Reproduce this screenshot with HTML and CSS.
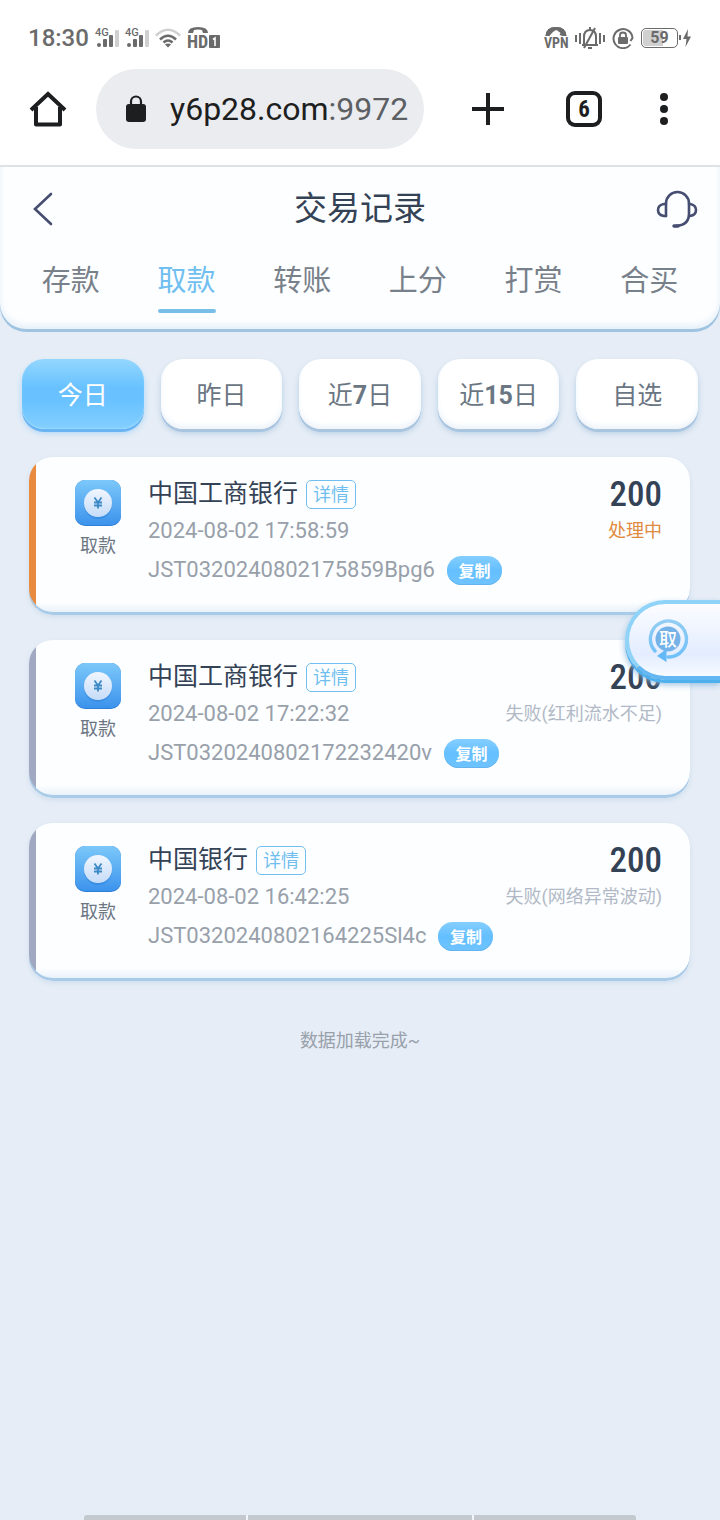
FILE: index.html
```html
<!DOCTYPE html>
<html lang="zh-CN">

<head>
    <meta charset="UTF-8" />
    <meta name="viewport" content="width=device-width, initial-scale=1.0" />
    <title>交易记录</title>
    <link rel="stylesheet" href="styles.css">
</head>

<body>
    <!-- shared icons -->
    <svg class="defs" width="0" height="0" aria-hidden="true">
        <defs>
            <linearGradient id="coin-bg" x1="0" y1="0" x2="0" y2="1">
                <stop offset="0" stop-color="#7cc8fa" />
                <stop offset="1" stop-color="#3c93ec" />
            </linearGradient>
            <linearGradient id="coin-face" x1="0" y1="0" x2="0" y2="1">
                <stop offset="0" stop-color="#f0f6ff" />
                <stop offset="1" stop-color="#c6dcf8" />
            </linearGradient>
            <linearGradient id="ring" x1="0" y1="0" x2="0" y2="1">
                <stop offset="0" stop-color="#92cdf3" />
                <stop offset="1" stop-color="#6fc0fa" />
            </linearGradient>
        </defs>
        <symbol id="coin" viewBox="0 0 46 46">
            <rect width="46" height="46" rx="10" fill="#2f7fd6" />
            <rect width="46" height="45" rx="10" fill="url(#coin-bg)" />
            <circle cx="23" cy="25" r="14" fill="#1f78d0" opacity=".35" />
            <circle cx="23" cy="23" r="14" fill="url(#coin-face)" />
            <path d="M19.5 17.500l3.500 5 3.500-5M19 22.500h8M19 25.500h8M23 22.500v6" fill="none" stroke="#3c8ac6" stroke-width="1.800" />
        </symbol>
    </svg>

    <div class="status-bar">
        <div class="status-group">
            <span class="clock">18:30</span>
            <svg class="signal" width="24" height="20" viewBox="0 0 24 20">
                <text x="0" y="8" font-size="11" font-weight="500">4G</text>
                <circle cx="4" cy="17" r="2" />
                <rect x="8" y="11" width="4" height="8" rx="1" />
                <rect x="14" y="7" width="4" height="12" rx="1" />
                <rect class="off" x="20" y="2" width="4" height="17" rx="1" />
            </svg>
            <svg class="signal" width="24" height="20" viewBox="0 0 24 20">
                <text x="0" y="8" font-size="11" font-weight="500">4G</text>
                <circle cx="4" cy="17" r="2" />
                <rect x="8" y="11" width="4" height="8" rx="1" />
                <rect x="14" y="7" width="4" height="12" rx="1" />
                <rect class="off" x="20" y="2" width="4" height="17" rx="1" />
            </svg>
            <svg width="26" height="20" viewBox="0 0 26 20" fill="none" stroke-width="2.600">
                <path d="M1 7.500Q13-4 25 7.500" stroke="#cfcfcf" />
                <path d="M5 11.500Q13 4 21 11.500" stroke="#6b6b6b" />
                <path d="M8.500 14.500Q13 10.500 17.500 14.500" stroke="#6b6b6b" />
                <path d="M10 16.500q3-2 6 0l-3 3z" fill="#6b6b6b" stroke="none" />
            </svg>
            <svg class="hd" width="33" height="24" viewBox="0 0 33 24" fill="#6b6b6b">
                <path d="M1 7Q1 1 11 1t10 6h-5l-1-3q-4-1-8 0L6 7z" />
                <text class="badge-text" x="0" y="22" font-size="18">HD</text>
                <rect x="22" y="9" width="11" height="13" rx="1" />
                <path d="M26 13.500l2-1.500v8" fill="none" stroke="#fff" stroke-width="1.600" />
            </svg>
        </div>
        <div class="status-group status-right">
            <svg class="vpn" width="24" height="24" viewBox="0 0 24 24" fill="#6b6b6b">
                <path d="M1.500 10Q2 1 12 1t10.500 9h-4l-3-1 1-2-4-3Q9 5 5.500 10z" />
                <path d="M2.500 10Q3 2 12 2t9.500 8" fill="none" stroke="#6b6b6b" stroke-width="2" />
                <text class="badge-text" x="0" y="22" font-size="14">VPN</text>
            </svg>
            <svg width="30" height="24" viewBox="0 0 30 24" fill="none" stroke="#6b6b6b" stroke-width="2">
                <path d="M1 9v7M5 7v11M25 7v11M29 9v7M7 19h16M9 18V11q0-7 6-7t6 7v7M15 1v3M13 22h4" />
                <path d="M20 2L9 22" />
            </svg>
            <svg width="22" height="22" viewBox="0 0 22 22" fill="#6b6b6b">
                <path d="M18.500 17.500A9.500 9.500 0 1 1 20.500 11l-2 3" fill="none" stroke="#6b6b6b" stroke-width="2" />
                <rect x="6" y="10" width="10" height="7" rx="1" />
                <path d="M8 10V8q0-2.500 3-2.500T14 8v2" fill="none" stroke="#6b6b6b" stroke-width="1.800" />
            </svg>
            <div class="battery">
                <span class="battery-level">59</span>
                <svg width="13" height="20" viewBox="0 0 13 20" fill="#6b6b6b">
                    <rect x="0" y="7" width="2" height="5" />
                    <path d="M9 1L4 11h3.500L6.500 19 12 8.500H8.500z" />
                </svg>
            </div>
        </div>
    </div>

    <div class="browser-bar">
        <button class="icon-btn" aria-label="主页">
            <svg width="38" height="38" viewBox="0 0 38 38" fill="none" stroke="#1d1e20" stroke-width="4">
                <path d="M2 20L19 4l17 16" stroke-linejoin="miter" />
                <path d="M7 17v17.500h24V17" stroke-linejoin="round" />
            </svg>
        </button>
        <a class="address" href="#">
            <svg width="22" height="28" viewBox="0 0 22 28" fill="#1d1e20">
                <rect x="1" y="9" width="20" height="18" rx="3" />
                <path d="M6 10V6.500a5 5 0 0 1 10 0V10" fill="none" stroke="#1d1e20" stroke-width="2.200" />
            </svg>
            <span class="url">y6p28.com<span class="port">:9972</span></span>
        </a>
        <div class="browser-actions">
            <button class="icon-btn" aria-label="新标签页">
                <svg width="32" height="32" viewBox="0 0 32 32" stroke="#1d1e20" stroke-width="4"><path d="M16 0v32M0 16h32" /></svg>
            </button>
            <button class="tab-count">6</button>
            <button class="icon-btn" aria-label="菜单">
                <svg width="8" height="32" viewBox="0 0 8 32" fill="#1d1e20">
                    <circle cx="4" cy="4" r="4" />
                    <circle cx="4" cy="16" r="4" />
                    <circle cx="4" cy="28" r="4" />
                </svg>
            </button>
        </div>
    </div>

    <header>
        <div class="title-row">
            <button class="icon-btn back" aria-label="返回">
                <svg width="20" height="34" viewBox="0 0 20 34" fill="none" stroke="#454d70" stroke-width="2.600" stroke-linecap="round"><path d="M18 2L2 17l16 15" /></svg>
            </button>
            <h1>交易记录</h1>
            <button class="icon-btn service" aria-label="客服">
                <svg width="42" height="38" viewBox="0 0 42 38" fill="none" stroke="#454d70" stroke-width="2.600" stroke-linecap="round" stroke-linejoin="round">
                    <path d="M10 26V13.500a11.500 11.500 0 0 1 23 0V24q0 11-13 12" />
                    <path d="M10 14H8q-6 1-6 6t6 6h2M33 14h1q6 1 6 6t-6 6h-1" />
                    <path d="M18 36h4" stroke-width="3.400" />
                </svg>
            </button>
        </div>
        <nav>
            <a href="#">存款</a>
            <a href="#" class="active">取款</a>
            <a href="#">转账</a>
            <a href="#">上分</a>
            <a href="#">打赏</a>
            <a href="#">合买</a>
        </nav>
    </header>

    <main>
        <div class="filters">
            <button class="filter active">今日</button>
            <button class="filter">昨日</button>
            <button class="filter">近<b>7</b>日</button>
            <button class="filter">近<b>15</b>日</button>
            <button class="filter">自选</button>
        </div>

        <div class="records">
            <article class="record pending">
                <div class="kind">
                    <svg width="46" height="46"><use href="#coin" /></svg>
                    <span>取款</span>
                </div>
                <div class="details">
                    <div class="bank"><h2>中国工商银行</h2><a class="more" href="#">详情</a></div>
                    <time>2024-08-02 17:58:59</time>
                    <div class="order"><span>JST0320240802175859Bpg6</span><button class="copy">复制</button></div>
                </div>
                <div class="result">
                    <strong>200</strong>
                    <span>处理中</span>
                </div>
            </article>

            <article class="record">
                <div class="kind">
                    <svg width="46" height="46"><use href="#coin" /></svg>
                    <span>取款</span>
                </div>
                <div class="details">
                    <div class="bank"><h2>中国工商银行</h2><a class="more" href="#">详情</a></div>
                    <time>2024-08-02 17:22:32</time>
                    <div class="order"><span>JST0320240802172232420v</span><button class="copy">复制</button></div>
                </div>
                <div class="result">
                    <strong>200</strong>
                    <span>失败(红利流水不足)</span>
                </div>
            </article>

            <article class="record">
                <div class="kind">
                    <svg width="46" height="46"><use href="#coin" /></svg>
                    <span>取款</span>
                </div>
                <div class="details">
                    <div class="bank"><h2>中国银行</h2><a class="more" href="#">详情</a></div>
                    <time>2024-08-02 16:42:25</time>
                    <div class="order"><span>JST0320240802164225Sl4c</span><button class="copy">复制</button></div>
                </div>
                <div class="result">
                    <strong>200</strong>
                    <span>失败(网络异常波动)</span>
                </div>
            </article>
        </div>

        <p class="end">数据加载完成~</p>
    </main>

    <!-- floating withdraw button -->
    <button class="float-btn">
        <svg width="42" height="44" viewBox="0 0 42 44">
            <circle cx="21" cy="21" r="12.500" fill="#74b2e8" />
            <path d="M8 33A18 18 0 1 1 21 39" fill="none" stroke="url(#ring)" stroke-width="3.400" stroke-linecap="round" />
            <path d="M10 38l9.500-7v13z" fill="#63b9f8" />
            <text x="21" y="28" text-anchor="middle" font-size="18" font-weight="500" fill="#fff">取</text>
        </svg>
    </button>

    <div class="nav-hint"><i></i><i></i><i></i></div>
</body>

</html>
```

FILE: styles.css
```css
* {
    box-sizing: border-box;
}

body {
    margin: 0;
    min-height: 100vh;
    background: #e6edf6;
    color: #344256;
    font-family: Roboto, "Noto Sans CJK SC", sans-serif;
    position: relative;
}

a {
    text-decoration: none;
    color: inherit;
}

button {
    font-family: inherit;
    border: 0;
    padding: 0;
    background: none;
    color: inherit;
}

svg {
    display: block;
    flex-shrink: 0;
}

h1,
h2,
p {
    margin: 0;
    font-weight: 400;
}

.defs {
    position: absolute;
}

.icon-btn {
    display: flex;
    align-items: center;
    justify-content: center;
}

/* phone status bar */
.status-bar {
    display: flex;
    justify-content: space-between;
    align-items: center;
    height: 70px;
    padding: 5px 28px 0;
    background: #fff;
    color: #6b6b6b;
}

.status-group {
    display: flex;
    align-items: center;
    gap: 6px;
}

.status-right {
    gap: 7px;
}

.clock {
    font-size: 24px;
    font-weight: 500;
}

.signal {
    fill: #6b6b6b;
}

.signal,
.hd,
.vpn {
    overflow: visible;
}

.signal .off {
    fill: #d0d0d0;
}

.badge-text {
    font-family: "Roboto Condensed", Roboto, sans-serif;
    font-weight: 700;
}

.battery {
    display: flex;
    align-items: center;
    gap: 1px;
}

.battery-level {
    width: 37px;
    height: 20px;
    border: 1px solid #6b6b6b;
    border-radius: 5px;
    background: linear-gradient(90deg, #d0d0d0 59%, #fff 59%);
    box-shadow: inset 0 0 0 1px #fff;
    font-size: 16px;
    font-weight: 700;
    line-height: 18px;
    text-align: center;
}

/* browser toolbar */
.browser-bar {
    display: flex;
    align-items: center;
    height: 97px;
    padding: 0 52px 17px 29px;
    background: #fff;
    border-bottom: 2px solid #dfe1e2;
}

.address {
    display: flex;
    align-items: center;
    gap: 23px;
    flex: 0 0 328px;
    height: 80px;
    margin-left: 29px;
    padding-left: 29px;
    border-radius: 40px;
    background: #ebecf0;
    color: #1d1e20;
    white-space: nowrap;
}

.url {
    font-size: 32px;
}

.port {
    color: #5c5f63;
}

.browser-actions {
    flex: 1;
    display: flex;
    align-items: center;
    justify-content: space-between;
    padding-left: 48px;
}

.tab-count {
    width: 36px;
    height: 36px;
    margin-left: 4px;
    border: 4px solid #1d1e20;
    border-radius: 9px;
    color: #1d1e20;
    font-family: "Roboto Condensed", Roboto, sans-serif;
    font-size: 23px;
    font-weight: 700;
}

/* page header */
header {
    height: 165px;
    background: #fdfeff;
    border-radius: 0 0 26px 26px;
    box-shadow: inset 0 -3px 0 #9fc3e0, inset 0 -7px 6px #e6f0f9;
}

.title-row {
    display: grid;
    grid-template-columns: 1fr auto 1fr;
    align-items: center;
    height: 83px;
    padding: 0 22px;
}

.back {
    justify-self: start;
    padding-left: 11px;
}

.service {
    justify-self: end;
}

h1 {
    font-size: 33px;
    line-height: 40px;
}

nav {
    display: flex;
    padding: 0 13px;
}

nav a {
    flex: 1;
    display: flex;
    flex-direction: column;
    align-items: center;
    padding-top: 3px;
    color: #78808a;
    font-size: 29px;
    line-height: 56px;
}

nav .active {
    color: #70bff0;
}

nav .active::after {
    content: "";
    width: 58px;
    height: 4px;
    border-radius: 2px;
    background: #78bee6;
}

/* date filters */
.filters {
    display: flex;
    gap: 17px;
    padding: 27px 22px 0;
}

.filter {
    flex: 1;
    height: 70px;
    margin-bottom: 4px;
    padding-bottom: 2px;
    border-radius: 22px;
    background: #fff;
    box-shadow: inset 0 -4px 5px #f0f5fb, 0 3px 0 #a9c5df, 0 4px 6px #b5cde4;
    color: #6b7683;
    font-size: 25px;
}

.filter.active {
    background: linear-gradient(#94d7ff, #69c2ff 40%, #69c2ff 60%, #83cfff);
    box-shadow: inset 0 -1px 1px #9ad9ff, 0 3px 0 #69b4f2, 0 4px 6px #a9d3f7;
    color: #fff;
}

/* records */
.records {
    display: flex;
    flex-direction: column;
    gap: 25px;
    padding: 24px 30px 0 29px;
}

.record {
    --mark: #a1a9c2;
    display: flex;
    height: 158px;
    padding: 20px 28px 0 46px;
    border-radius: 24px;
    background:
        linear-gradient(90deg, var(--mark) 7px, transparent 7px),
        linear-gradient(#fdfeff 145px, #e9f2fa 155px);
    box-shadow: inset 0 -3px 0 #a9cbe8, 0 2px 5px #cfdeee;
}

.record.pending {
    --mark: #e88b3e;
}

.kind {
    display: flex;
    flex-direction: column;
    align-items: center;
    gap: 7px;
    padding-top: 3px;
    color: #6b7683;
    font-size: 18px;
    line-height: 26px;
}

.details {
    flex: 1;
    padding-left: 27px;
    color: #98a0aa;
    font-size: 22px;
    white-space: nowrap;
}

.bank {
    display: flex;
    align-items: center;
    gap: 8px;
    height: 33px;
    color: #344256;
}

h2 {
    font-size: 25px;
    line-height: 32px;
}

.more {
    height: 29px;
    margin-top: 2px;
    padding: 0 6px;
    border: 1px solid #70bff0;
    border-radius: 5px;
    color: #70bff0;
    font-size: 18px;
    line-height: 27px;
}

time {
    display: block;
    line-height: 41px;
}

.order {
    display: flex;
    align-items: center;
    gap: 12px;
    line-height: 38px;
}

.copy {
    width: 55px;
    height: 29px;
    border-radius: 15px;
    background: linear-gradient(#84ceff, #64bfff 50%, #6fc4ff);
    box-shadow: inset 0 -1px 0 #65b3ee;
    color: #fff;
    font-size: 16px;
    font-weight: 700;
}

.result {
    display: flex;
    flex-direction: column;
    align-items: flex-end;
    color: #b1b9c6;
    font-size: 18px;
    line-height: 36px;
    white-space: nowrap;
}

.result strong {
    color: #344256;
    font-family: "Roboto Condensed", Roboto, sans-serif;
    font-size: 35px;
    font-weight: 500;
}

.pending .result {
    color: #e08a40;
}

.end {
    margin-top: 47px;
    color: #98a0aa;
    font-size: 18px;
    line-height: 26px;
    text-align: center;
}

/* floating button */
.float-btn {
    position: absolute;
    top: 600px;
    right: 0;
    width: 95px;
    height: 80px;
    padding-left: 18px;
    border: 4px solid #8fd3f8;
    border-right: 0;
    border-bottom-color: #63b7f2;
    border-radius: 40px 0 0 40px;
    background: linear-gradient(#fbfcff, #e3edff 70%, #f8fbff);
    box-shadow: 0 3px 0 #4fb0ee, 0 4px 7px #8ab5dc;
}

.nav-hint {
    position: fixed;
    bottom: 0;
    left: 84px;
    right: 84px;
    display: grid;
    grid-template-columns: 162fr 224fr 162fr;
    gap: 2px;
    height: 5px;
    border-radius: 3px 3px 0 0;
    overflow: hidden;
    background: #f2f5f9;
}

.nav-hint i {
    background: #c4c9cf;
}
```
